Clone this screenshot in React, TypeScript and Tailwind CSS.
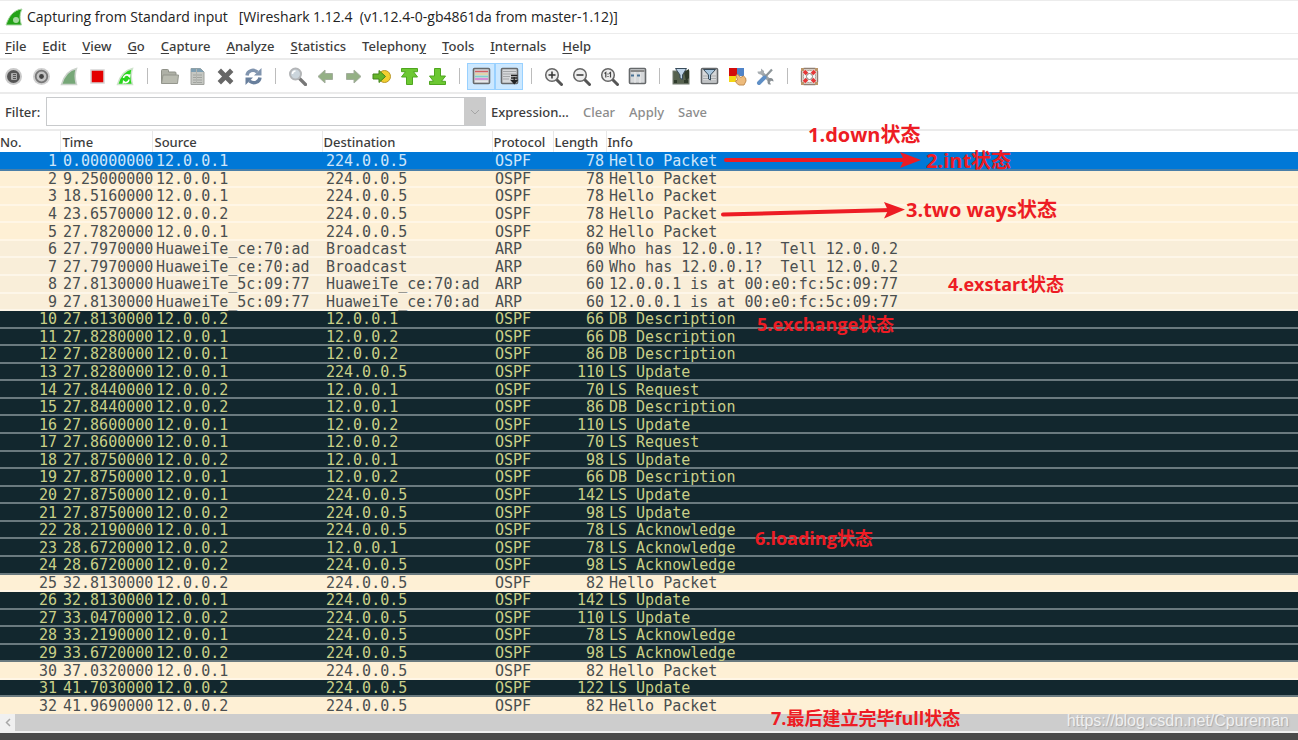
import React, { useState } from 'react';

type Kind = 'selected' | 'ospf' | 'arp' | 'dark';
type Packet = [time: string, source: string, destination: string, protocol: string, length: number, info: string, kind: Kind];

const A = '12.0.0.1';
const B = '12.0.0.2';
const MCAST = '224.0.0.5';
const H_CE = 'HuaweiTe_ce:70:ad';
const H_5C = 'HuaweiTe_5c:09:77';

const PACKETS: Packet[] = [
  ['0.00000000', A, MCAST, 'OSPF', 78, 'Hello Packet', 'selected'],
  ['9.25000000', A, MCAST, 'OSPF', 78, 'Hello Packet', 'ospf'],
  ['18.5160000', A, MCAST, 'OSPF', 78, 'Hello Packet', 'ospf'],
  ['23.6570000', B, MCAST, 'OSPF', 78, 'Hello Packet', 'ospf'],
  ['27.7820000', A, MCAST, 'OSPF', 82, 'Hello Packet', 'ospf'],
  ['27.7970000', H_CE, 'Broadcast', 'ARP', 60, 'Who has 12.0.0.1?  Tell 12.0.0.2', 'arp'],
  ['27.7970000', H_CE, 'Broadcast', 'ARP', 60, 'Who has 12.0.0.1?  Tell 12.0.0.2', 'arp'],
  ['27.8130000', H_5C, H_CE, 'ARP', 60, '12.0.0.1 is at 00:e0:fc:5c:09:77', 'arp'],
  ['27.8130000', H_5C, H_CE, 'ARP', 60, '12.0.0.1 is at 00:e0:fc:5c:09:77', 'arp'],
  ['27.8130000', B, A, 'OSPF', 66, 'DB Description', 'dark'],
  ['27.8280000', A, B, 'OSPF', 66, 'DB Description', 'dark'],
  ['27.8280000', A, B, 'OSPF', 86, 'DB Description', 'dark'],
  ['27.8280000', A, MCAST, 'OSPF', 110, 'LS Update', 'dark'],
  ['27.8440000', B, A, 'OSPF', 70, 'LS Request', 'dark'],
  ['27.8440000', B, A, 'OSPF', 86, 'DB Description', 'dark'],
  ['27.8600000', A, B, 'OSPF', 110, 'LS Update', 'dark'],
  ['27.8600000', A, B, 'OSPF', 70, 'LS Request', 'dark'],
  ['27.8750000', B, A, 'OSPF', 98, 'LS Update', 'dark'],
  ['27.8750000', A, B, 'OSPF', 66, 'DB Description', 'dark'],
  ['27.8750000', A, MCAST, 'OSPF', 142, 'LS Update', 'dark'],
  ['27.8750000', B, MCAST, 'OSPF', 98, 'LS Update', 'dark'],
  ['28.2190000', A, MCAST, 'OSPF', 78, 'LS Acknowledge', 'dark'],
  ['28.6720000', B, A, 'OSPF', 78, 'LS Acknowledge', 'dark'],
  ['28.6720000', B, MCAST, 'OSPF', 98, 'LS Acknowledge', 'dark'],
  ['32.8130000', B, MCAST, 'OSPF', 82, 'Hello Packet', 'ospf'],
  ['32.8130000', A, MCAST, 'OSPF', 142, 'LS Update', 'dark'],
  ['33.0470000', B, MCAST, 'OSPF', 110, 'LS Update', 'dark'],
  ['33.2190000', A, MCAST, 'OSPF', 78, 'LS Acknowledge', 'dark'],
  ['33.6720000', B, MCAST, 'OSPF', 98, 'LS Acknowledge', 'dark'],
  ['37.0320000', A, MCAST, 'OSPF', 82, 'Hello Packet', 'ospf'],
  ['41.7030000', B, MCAST, 'OSPF', 122, 'LS Update', 'dark'],
  ['41.9690000', B, MCAST, 'OSPF', 82, 'Hello Packet', 'ospf'],
];

const ROW_STYLE: Record<Kind, string> = {
  selected: 'bg-[#0078d7] text-[#cfe6fa] border-[#4a7fa8]',
  ospf: 'bg-[#fef0d5] text-[#4a4f50] border-[#fff6e6]',
  arp: 'bg-[#f9eed9] text-[#4a4f50] border-[#fdf6e9]',
  dark: 'bg-[#12272e] text-[#c9cf88] border-[#6a7a7f]',
};

// label split around the underlined access key
const MENUS: [string, string, string][] = [
  ['', 'F', 'ile'],
  ['', 'E', 'dit'],
  ['', 'V', 'iew'],
  ['', 'G', 'o'],
  ['', 'C', 'apture'],
  ['', 'A', 'nalyze'],
  ['', 'S', 'tatistics'],
  ['Telephon', 'y', ''],
  ['', 'T', 'ools'],
  ['', 'I', 'nternals'],
  ['', 'H', 'elp'],
];

const ARROW = 'M2 9.5 9 3v3.5h7.5v6H9V16Z';

function Magnifier({ children }: { children?: React.ReactNode }) {
  return (
    <>
      <path d="m12.5 12.5 5 5" stroke="#555" strokeWidth="3" strokeLinecap="round" />
      <circle cx="8" cy="8" r="6.3" fill="#eee" stroke="#666" strokeWidth="1.5" />
      {children}
    </>
  );
}

function Screen() {
  return <rect x="1.5" y="1.5" width="16" height="15" rx="1" fill="#d6d8da" stroke="#66696b" strokeWidth="1.6" />;
}

const GROUPS: { label: string; active?: boolean; art: React.ReactNode }[][] = [
  [
    {
      label: 'Interfaces',
      art: (
        <>
          <circle cx="9.5" cy="9.5" r="8.5" fill="#c9c9c9" />
          <circle cx="9.5" cy="9.5" r="6.5" fill="#555" />
          <rect x="7" y="6" width="6" height="7" rx="1" fill="#aaa" />
          <path d="M5 7v5M9 7.5h3M9 9.5h3M9 11.5h3" stroke="#555" strokeWidth="1" />
        </>
      ),
    },
    {
      label: 'Options',
      art: (
        <>
          <circle cx="9.5" cy="9.5" r="8.5" fill="#cfcfcf" />
          <circle cx="9.5" cy="9.5" r="5.8" fill="#c4c4c4" stroke="#777" strokeWidth="1.8" />
          <circle cx="9.5" cy="9.5" r="2.4" fill="#444" />
        </>
      ),
    },
    {
      label: 'Start',
      art: <path d="M1.5 17.5C4 9 9 3 16.5 1.5c-2.2 6-1.7 10 0 16Z" fill="#76a777" stroke="#ccd3cc" strokeWidth="1.5" />,
    },
    {
      label: 'Stop',
      art: <rect x="3" y="3" width="13" height="13" fill="#e40000" stroke="#d5d5d5" strokeWidth="1.5" />,
    },
    {
      label: 'Restart',
      art: (
        <>
          <path d="M1.5 17.5C4 9 9 3 16.5 1.5c-2.2 6-1.7 10 0 16Z" fill="#29d51d" stroke="#cfe3cc" strokeWidth="1.5" />
          <path d="M7.5 11a3.5 3.5 0 0 1 5.5-2.5M13 12.5a3.5 3.5 0 0 1-5.5 2.5" stroke="#fff" strokeWidth="1.6" fill="none" />
          <path d="m14.5 7-.5 4-3-2.5ZM6.5 17l.5-4 3 2.5Z" fill="#fff" />
        </>
      ),
    },
  ],
  [
    {
      label: 'Open',
      art: (
        <>
          <path d="M1.5 3.5q0-1 1-1h5q1 0 1 1V5H15q1 0 1 1v10H1.5Z" fill="#aeb0a6" stroke="#8f9188" />
          <path d="M3 8h15.5l-1 8.5h-16Z" fill="#b9bbb0" stroke="#94968d" />
        </>
      ),
    },
    {
      label: 'Save',
      art: (
        <>
          <path d="M3 1.5h9.5L16 5v12.5H3Z" fill="#c5c7c2" stroke="#a0a29d" />
          <path d="M3 1.5h9.5L16 5H3Z" fill="#7f9fb2" />
          <path d="M5 8h9M5 10.5h9M5 13h9M5 15.5h9" stroke="#a1a49f" />
          <path d="M8.5 2v14" stroke="#b1b3ae" />
        </>
      ),
    },
    {
      label: 'Close',
      art: <path d="m5 5 9 9M14 5l-9 9" stroke="#676767" strokeWidth="4.8" strokeLinecap="square" />,
    },
    {
      label: 'Reload',
      art: (
        <>
          <path d="M3 8.5C3.5 4 9 1.5 13.5 5" stroke="#8094ae" strokeWidth="3.4" fill="none" />
          <path d="M17.5 1v7.5H10Z" fill="#8094ae" />
          <path d="M16 10.5C15.5 15 10 17.5 5.5 14" stroke="#687f9c" strokeWidth="3.4" fill="none" />
          <path d="M1.5 18v-7.5H9Z" fill="#687f9c" />
        </>
      ),
    },
  ],
  [
    {
      label: 'Find',
      art: (
        <>
          <path d="m11.5 11.5 6 6" stroke="#777" strokeWidth="3.2" strokeLinecap="round" />
          <circle cx="7.5" cy="7" r="5.5" fill="#cbd5dc" stroke="#b3b5b7" strokeWidth="2" />
          <path d="M4.5 7a3 3 0 0 1 3-3" stroke="#fff" strokeWidth="1.5" fill="none" />
        </>
      ),
    },
    { label: 'Back', art: <path d={ARROW} fill="#94b085" stroke="#a4ae9e" /> },
    { label: 'Forward', art: <path d={ARROW} transform="matrix(-1 0 0 1 19 0)" fill="#94b085" stroke="#a4ae9e" /> },
    {
      label: 'Go to packet',
      art: (
        <>
          <circle cx="12.5" cy="9.5" r="6" fill="#f2cf2f" stroke="#b8962a" />
          <path d="M1 7h6V3.5l6.5 6-6.5 6V12H1Z" fill="#66b52a" stroke="#43841a" />
        </>
      ),
    },
    {
      label: 'First packet',
      art: <path d="M1.5 1.5h16v3.2h-4l4 5.3h-5v7.5h-6V10h-5l4-5.3h-4Z" fill="#6cc832" stroke="#4ea61f" />,
    },
    {
      label: 'Last packet',
      art: <path d="M6.5 1.5h6V9h5l-4 5.3h4v3.2h-16v-3.2h4L1.5 9h5Z" fill="#6cc832" stroke="#4ea61f" />,
    },
  ],
  [
    {
      label: 'Colorize',
      active: true,
      art: (
        <>
          <Screen />
          <path d="M3 4.5h13" stroke="#d35d62" strokeWidth="1.5" />
          <path d="M3 7h13" stroke="#e3d59d" strokeWidth="1.5" />
          <path d="M3 9.5h13" stroke="#7ed0cd" strokeWidth="1.5" />
          <path d="M3 12h13" stroke="#d477d6" strokeWidth="1.5" />
          <path d="M3 14.3h13" stroke="#eee" />
        </>
      ),
    },
    {
      label: 'Auto scroll',
      active: true,
      art: (
        <>
          <Screen />
          <path d="M3 4.5h13M3 7h13M3 9.5h7M3 12h6" stroke="#a3a6a8" />
          <path d="M11 8.5h6.5M11 11h6.5M14.2 10v4M11.5 13.5H17l-2.7 3Z" stroke="#222" strokeWidth="1.3" fill="#222" />
        </>
      ),
    },
  ],
  [
    { label: 'Zoom in', art: <Magnifier><path d="M4.5 8h7M8 4.5v7" stroke="#333" strokeWidth="1.5" /></Magnifier> },
    { label: 'Zoom out', art: <Magnifier><path d="M4.5 8h7" stroke="#333" strokeWidth="1.5" /></Magnifier> },
    {
      label: 'Normal size',
      art: <Magnifier><path d="m4.5 6.5 1.3-1v5M9.2 6.5l1.3-1v5M8 6.5v1M8 9v1" stroke="#444" strokeWidth="1.2" fill="none" /></Magnifier>,
    },
    {
      label: 'Resize columns',
      art: (
        <>
          <Screen />
          <path d="M2.5 4h14" stroke="#888" strokeWidth="2" />
          <path d="M7 5v11M12 5v11" stroke="#eee" />
          <path d="M3 8.5h3M9 8.5h3" stroke="#4a7396" strokeWidth="2" />
        </>
      ),
    },
  ],
  [
    {
      label: 'Capture filters',
      art: (
        <>
          <rect x="1" y="4" width="16" height="13" fill="#56624f" stroke="#737b70" />
          <path d="M2 13h3v3H2Zm10 0h4v3h-4ZM12 5l5-3v9l-3 3Z" fill="#2e3a2b" />
          <path d="M3.5 1.5h11L10.5 8v4.5L8 11V8Z" fill="#bed4e7" stroke="#394c5b" />
        </>
      ),
    },
    {
      label: 'Display filters',
      art: (
        <>
          <Screen />
          <path d="M3 9h13M3 11.5h13M3 14h13" stroke="#aaadaf" />
          <path d="M3.5 2.5h12L10.5 8v5l-2-1V8Z" fill="#a9c7df" stroke="#394c5b" />
        </>
      ),
    },
    {
      label: 'Coloring rules',
      art: (
        <>
          <path d="M1 1h8v8H1Z" fill="#d30b0b" />
          <path d="M9 1h7v8H9Z" fill="#4f83c8" />
          <path d="M1 9h7v6H1Z" fill="#f4d714" />
          <path d="M8 8.5q1.5-2 3 0l1.5 2 3-1.5q3 1.5 2.5 5l-2 4h-5q-3-1.5-3.5-4l2-1Z" fill="#edbb7c" stroke="#c28d50" />
        </>
      ),
    },
    {
      label: 'Preferences',
      art: (
        <>
          <path d="m4.5 4.5 10 10" stroke="#9da4a9" strokeWidth="3.2" />
          <path d="M1.5 4.5q0 3 3.5 3T8 4L5 1.5v3Z" fill="#a8aeb2" />
          <path d="M11.5 15q0 3 3.5 2.5l-1.5-3 1-1 3 1q0-3.5-3-3.5t-3 4Z" fill="#878e93" />
          <path d="M16 2.5 9 10" stroke="#8d9599" strokeWidth="2.2" />
          <path d="M3 16l5.5-5.5" stroke="#5f8fc6" strokeWidth="4" strokeLinecap="round" />
        </>
      ),
    },
  ],
  [
    {
      label: 'Help',
      art: (
        <>
          <rect x="1.5" y="1.5" width="16" height="16" rx="3" fill="#eee7e1" stroke="#8f7f73" strokeWidth="1.4" />
          <circle cx="9.5" cy="9.5" r="6.2" fill="#f5f5f5" stroke="#b5a79c" />
          <path d="m4 4 3 3M15 4l-3 3M4 15l3-3M15 15l-3-3" stroke="#e63737" strokeWidth="3.6" />
          <circle cx="9.5" cy="9.5" r="3" fill="#fff" stroke="#8a7a70" />
          <path d="M1 1h3v3H1ZM15 1h3v3h-3ZM1 15h3v3H1ZM15 15h3v3h-3Z" fill="#bb966a" />
        </>
      ),
    },
  ],
];

const COLUMNS = [
  { name: 'No.', width: 'w-[60px]', pad: '' },
  { name: 'Time', width: 'w-[92px]', pad: 'pl-[2px]' },
  { name: 'Source', width: 'w-[170px]', pad: 'pl-[2px]' },
  { name: 'Destination', width: 'w-[170px]', pad: 'pl-px' },
  { name: 'Protocol', width: 'w-[61px]', pad: 'pl-px' },
  { name: 'Length', width: 'w-[53px]', pad: 'pl-px' },
  { name: 'Info', width: '', pad: 'pl-px' },
];

function Toolbar() {
  return (
    <div role="toolbar" className="flex h-[34px] shrink-0 items-center gap-0.5 border-b-2 border-[#ebebeb]">
      {GROUPS.map((group, g) => (
        <React.Fragment key={g}>
          {g > 0 && (
            <div className="flex w-3.5 justify-center">
              <div className="h-4 w-px bg-[#bcbcbc]" />
            </div>
          )}
          {group.map(({ label, active, art }) => (
            <button
              key={label}
              aria-label={label}
              className={`flex h-[27px] items-center justify-center ${active ? 'w-7 -mx-px border border-[#99d1ff] bg-[#cce8ff]' : 'w-[26px]'}`}
            >
              <svg width="19" height="19" viewBox="0 0 19 19" fill="none" className="shrink-0">{art}</svg>
            </button>
          ))}
        </React.Fragment>
      ))}
    </div>
  );
}

function FilterBar() {
  const [filter, setFilter] = useState('');
  return (
    <div className="flex h-[37px] shrink-0 items-center border-b-2 border-[#ebebeb] pl-[5px] font-medium">
      <label htmlFor="filter" className="w-[41px] pt-0.5">Filter:</label>
      <div className="flex h-[29px] w-[440px] border border-[#c8cacc]">
        <input
          id="filter"
          value={filter}
          onChange={e => setFilter(e.target.value)}
          className="min-w-0 flex-1 bg-white px-1 outline-none"
        />
        <button aria-label="Filter history" className="flex w-[21px] items-center justify-center bg-[#cbcbcb]">
          <svg width="10" height="6" viewBox="0 0 10 6" fill="none">
            <path d="m1 1 4 4 4-4" stroke="#a5a5a5" />
          </svg>
        </button>
      </div>
      <div className="flex gap-3.5 pt-0.5 pl-[5px]">
        <button>Expression...</button>
        <button className="text-[#8c8c8c]">Clear</button>
        <button className="text-[#8c8c8c]">Apply</button>
        <button className="text-[#8c8c8c]">Save</button>
      </div>
    </div>
  );
}

function PacketList() {
  return (
    <table className="h-full w-full table-fixed border-collapse">
      <thead>
        <tr className="h-[21px]">
          {COLUMNS.map(({ name, width, pad }) => (
            <th key={name} className={`border-r border-[#e8e8e8] p-0 text-left leading-5 font-medium last:border-r-0 ${width} ${pad}`}>{name}</th>
          ))}
        </tr>
      </thead>
      <tbody className="font-['DejaVu_Sans_Mono','Liberation_Mono',monospace] text-[15px] leading-[14px] whitespace-pre">
        {PACKETS.map(([time, source, destination, protocol, length, info, kind], i) => (
          <tr key={i} className={`h-[17px] border-b-2 last:border-b-0 *:pt-px ${ROW_STYLE[kind]}`}>
            <td className="pr-[3px] text-right">{i + 1}</td>
            <td className="pl-[3px]">{time}</td>
            <td className="pl-1">{source}</td>
            <td className="pl-1">{destination}</td>
            <td className="pl-[3px]">{protocol}</td>
            <td className="pr-[2px] text-right">{length}</td>
            <td className="pl-[3px]">{info}</td>
          </tr>
        ))}
      </tbody>
    </table>
  );
}

// Red notes drawn over the capture window
const NOTES = [
  { text: '1.down状态', place: 'left-[808px] top-[123px] text-[20px]' },
  { text: '2.int状态', place: 'left-[926px] top-[149px] text-[20px]' },
  { text: '3.two ways状态', place: 'left-[906px] top-[198px] text-[20px]' },
  { text: '4.exstart状态', place: 'left-[948px] top-[272px] text-[18px]' },
  { text: '5.exchange状态', place: 'left-[757px] top-[312px] text-[18px]' },
  { text: '6.loading状态', place: 'left-[755px] top-[526px] text-[18px]' },
  { text: '7.最后建立完毕full状态', place: 'left-[771px] top-[706px] text-[18px]' },
];

function Notes() {
  return (
    <div className="pointer-events-none absolute inset-0 font-['Open_Sans','Noto_Sans_CJK_SC',sans-serif] leading-6 font-bold text-[#ed1c24]">
      {NOTES.map(({ text, place }) => (
        <span key={text} className={`absolute whitespace-nowrap ${place}`}>{text}</span>
      ))}
      <svg className="absolute top-[148px] left-[720px]" width="204" height="74" viewBox="0 0 204 74">
        <path d="M6 12H188" stroke="#ed1c24" strokeWidth="4" strokeLinecap="round" />
        <path d="m201 12-21 8 4-8-4-8Z" fill="#ed1c24" />
        <path d="M3 66.5 172 62" stroke="#ed1c24" strokeWidth="4" strokeLinecap="round" />
        <path d="m185 61.5-21 9 4-8-4-8.5Z" fill="#ed1c24" />
      </svg>
    </div>
  );
}

export default function App() {
  return (
    <div className="relative flex h-screen flex-col overflow-hidden bg-white font-['Noto_Sans','Open_Sans',sans-serif] text-[13px] text-[#3c3c3c]">
      <header className="flex h-[34px] shrink-0 items-center gap-1 border-y border-[#ececec] pl-[5px] font-['Open_Sans','Noto_Sans',sans-serif] text-sm whitespace-pre text-[#222]">
        <svg width="18" height="18" viewBox="0 0 18 18">
          <path d="M1 17C4 8 8.5 2 17 1c-2.5 5-2.5 10-.5 16Z" fill="#23a217" stroke="#a9d5a3" />
          <circle cx="11" cy="12" r="3" fill="#a5d99f" />
        </svg>
        <h1>Capturing from Standard input   [Wireshark 1.12.4  (v1.12.4-0-gb4861da from master-1.12)]</h1>
      </header>
      <nav className="flex h-[26px] shrink-0 items-center gap-4 border-b-2 border-[#ebebeb] pt-0.5 pl-[5px] font-medium">
        {MENUS.map(([before, key, after]) => (
          <button key={before + key + after}>
            {before}<span className="underline underline-offset-2">{key}</span>{after}
          </button>
        ))}
      </nav>
      <Toolbar />
      <FilterBar />
      <main className="min-h-0 flex-1">
        <PacketList />
      </main>
      <div className="flex h-[17px] shrink-0 bg-[#cdcdcd]">
        <button aria-label="Scroll left" className="flex w-[15px] items-center justify-center bg-[#f0f0f0]">
          <svg width="6" height="9" viewBox="0 0 6 9" fill="none">
            <path d="M5 1 1.5 4.5 5 8" stroke="#a8a8a8" strokeWidth="1.5" />
          </svg>
        </button>
      </div>
      <footer className="h-[9px] shrink-0 border-t-2 border-[#f0f0f0] bg-[#4a4a4a]" />
      <Notes />
      <a
        href="https://blog.csdn.net/Cpureman"
        className="absolute right-[9px] bottom-[9px] font-['Liberation_Sans',sans-serif] text-base leading-5 text-[#f0f0f0] [text-shadow:1px_1px_1px_#aaa]"
      >
        https://blog.csdn.net/Cpureman
      </a>
    </div>
  );
}
